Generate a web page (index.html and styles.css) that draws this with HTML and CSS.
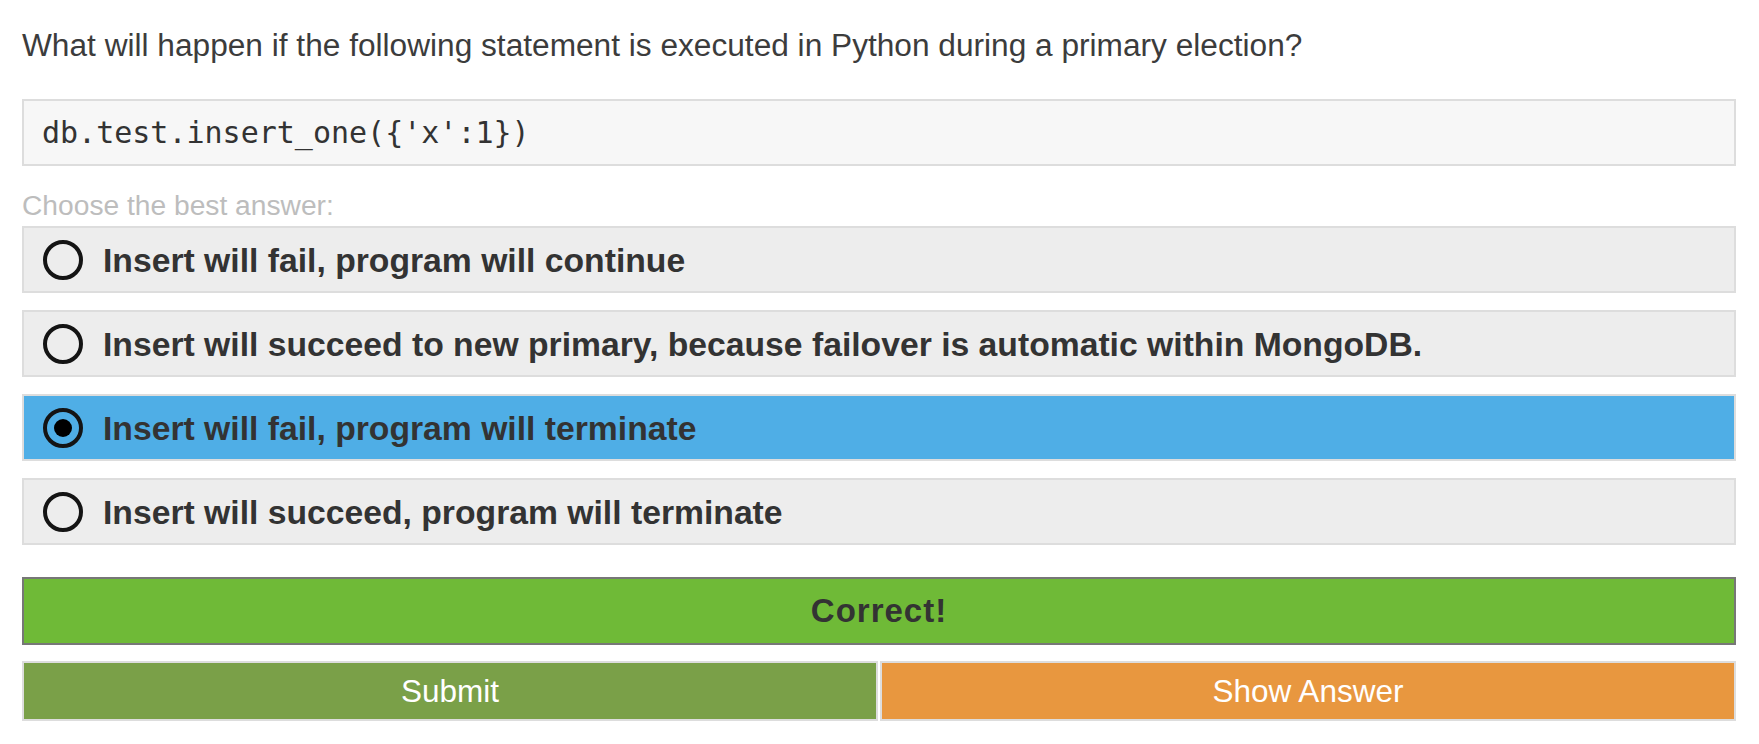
FILE: index.html
```html
<!DOCTYPE html>
<html lang="en">
<head>
<meta charset="utf-8">
<title>Quiz</title>
<link rel="stylesheet" href="styles.css">
</head>
<body>
<div class="quiz">
  <p class="question">What will happen if the following statement is executed in Python during a primary election?</p>
  <pre class="code">db.test.insert_one({'x':1})</pre>
  <div class="prompt">Choose the best answer:</div>
  <ul class="options">
    <li class="option"><span class="radio"></span><span class="label">Insert will fail, program will continue</span></li>
    <li class="option"><span class="radio"></span><span class="label">Insert will succeed to new primary, because failover is automatic within MongoDB.</span></li>
    <li class="option selected"><span class="radio"></span><span class="label">Insert will fail, program will terminate</span></li>
    <li class="option"><span class="radio"></span><span class="label">Insert will succeed, program will terminate</span></li>
  </ul>
  <div class="result">Correct!</div>
  <div class="actions">
    <button class="btn submit">Submit</button>
    <button class="btn show">Show Answer</button>
  </div>
</div>
</body>
</html>
```
FILE: styles.css
```css
html, body {
  margin: 0;
  padding: 0;
  background: #ffffff;
}

.quiz {
  padding: 27px 23px 0 22px;
  font-family: "Liberation Sans", Arial, sans-serif;
  color: #333333;
}

.question {
  margin: 0;
  font-size: 31.65px;
  line-height: 36px;
  color: #3c3c3c;
}

.code {
  margin: 36px 0 0 0;
  box-sizing: border-box;
  height: 67px;
  padding: 15px 18px 0 18px;
  border: 2px solid #dddddd;
  background: #f7f7f7;
  font-family: "DejaVu Sans Mono", "Liberation Mono", monospace;
  font-size: 30px;
  line-height: 34px;
  color: #333333;
}

.prompt {
  margin-top: 23px;
  font-size: 28.2px;
  line-height: 32px;
  color: #bdbdbd;
}

.options {
  list-style: none;
  margin: 5px 0 0 0;
  padding: 0;
  display: flex;
  flex-direction: column;
  gap: 17px;
}

.option {
  box-sizing: border-box;
  height: 67px;
  display: flex;
  align-items: center;
  gap: 20px;
  padding-left: 19px;
  border: 2px solid #dddddd;
  background: #ededed;
}

.option.selected {
  background: #4faee6;
}

.radio {
  box-sizing: border-box;
  flex: 0 0 40px;
  width: 40px;
  height: 40px;
  border: 4px solid #141414;
  border-radius: 50%;
  display: flex;
  align-items: center;
  justify-content: center;
}

.option.selected .radio::after {
  content: "";
  width: 18px;
  height: 18px;
  border-radius: 50%;
  background: #000000;
}

.label {
  font-weight: bold;
  font-size: 33.7px;
  line-height: 38px;
  color: #333333;
}

.result {
  margin-top: 32px;
  box-sizing: border-box;
  height: 68px;
  display: flex;
  align-items: center;
  justify-content: center;
  border: 2px solid #777777;
  background: #6fba37;
  font-weight: bold;
  font-size: 33px;
  letter-spacing: 1px;
  color: #333333;
}

.actions {
  margin-top: 16px;
  display: grid;
  grid-template-columns: 1fr 1fr;
  gap: 2px;
}

.btn {
  box-sizing: border-box;
  height: 60px;
  margin: 0;
  padding: 0;
  border: 2px solid #dddddd;
  font-family: "Liberation Sans", Arial, sans-serif;
  font-size: 31.5px;
  color: #ffffff;
  cursor: pointer;
}

.submit {
  background: #7aa048;
}

.show {
  background: #e8973f;
}
```
